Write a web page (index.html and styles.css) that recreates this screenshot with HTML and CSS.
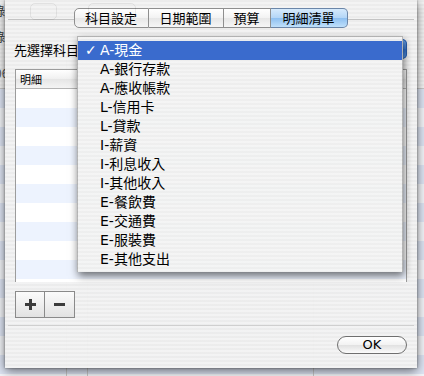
FILE: index.html
```html
<!DOCTYPE html>
<html lang="zh-Hant">
<head>
    <meta charset="UTF-8">
    <title>明細清單</title>
    <link rel="stylesheet" href="styles.css">
</head>
<body>
    <div class="desk">
        <div class="back">
            <div class="back-head">
                <span class="back-txt t1">錄</span>
                <span class="back-txt t2">錄</span>
                <span class="back-txt t3">06</span>
            </div>
            <div class="back-rows"></div>
            <div class="back-col c1"></div>
            <div class="back-col c2"></div>
            <div class="back-col c3"></div>
        </div>

        <div class="sheet">
            <div class="ghost g1"></div>
            <div class="ghost g2"></div>

            <div class="tabbox">
                <div class="tabs">
                    <span class="tab w75">科目設定</span>
                    <span class="tab w75">日期範圍</span>
                    <span class="tab w47">預算</span>
                    <span class="tab w77 on">明細清單</span>
                </div>

                <div class="pick-row">
                    <span class="pick-label">先選擇科目</span>
                    <div class="popup"></div>
                </div>

                <div class="grid">
                    <div class="grid-head">
                        <span class="grid-col">明細</span>
                        <span class="grid-corner"></span>
                    </div>
                    <div class="grid-body"></div>
                </div>

                <div class="pm">
                    <button class="pm-btn">
                        <svg width="11" height="11" viewBox="0 0 11 11"><rect x="4" y="0" width="3" height="11" fill="#3c3c3c"/><rect x="0" y="4" width="11" height="3" fill="#3c3c3c"/></svg>
                    </button>
                    <button class="pm-btn">
                        <svg width="11" height="11" viewBox="0 0 11 11"><rect x="0" y="4" width="11" height="3" fill="#3c3c3c"/></svg>
                    </button>
                </div>
            </div>

            <div class="foot">
                <button class="ok">OK</button>
            </div>
        </div>

        <ul class="menu">
            <li class="item sel"><span class="check">✓</span>A-現金</li>
            <li class="item">A-銀行存款</li>
            <li class="item">A-應收帳款</li>
            <li class="item">L-信用卡</li>
            <li class="item">L-貸款</li>
            <li class="item">I-薪資</li>
            <li class="item">I-利息收入</li>
            <li class="item">I-其他收入</li>
            <li class="item">E-餐飲費</li>
            <li class="item">E-交通費</li>
            <li class="item">E-服裝費</li>
            <li class="item">E-其他支出</li>
        </ul>
    </div>
</body>
</html>
```

FILE: styles.css
```css
body { margin: 0; font-family: "DejaVu Sans", "Noto Sans CJK TC", sans-serif; color: #000; }
.desk { position: relative; width: 424px; height: 376px; overflow: hidden; background: #f2f2f2; }

/* window behind the sheet */
.back { position: absolute; inset: 0; background: repeating-linear-gradient(#eeeeee 0 2px, #f5f5f5 2px 4px); }
.back-head { height: 88px; border-bottom: 1px solid #c9c9c9; position: relative; }
.back-txt { position: absolute; left: -7px; font-size: 12px; color: #333; font-family: "Noto Sans CJK TC", sans-serif; }
.t1 { top: 2px; }
.t2 { top: 28px; }
.t3 { top: 64px; left: -5px; color: #555; }
.back-rows { height: 288px; background: repeating-linear-gradient(#dfe6f5 0 19px, #f4f6fa 19px 38px); }
.back-col { position: absolute; top: 60px; bottom: 0; width: 1px; background: #c8c8c8; }
.c1 { left: 66px; }
.c2 { left: 87px; }
.c3 { left: 313px; }

/* the sheet */
.sheet {
    position: absolute; left: 5px; top: 0; width: 412px; height: 368px;
    background: repeating-linear-gradient(rgba(236,236,236,.97) 0 2px, rgba(243,243,243,.97) 2px 4px);
    box-shadow: 0 3px 10px rgba(0,0,0,.55), 0 0 2px rgba(0,0,0,.4);
}
.ghost { position: absolute; top: 3px; height: 15px; border: 1px solid rgba(0,0,0,.07); border-radius: 5px; }
.g1 { left: 25px; width: 25px; }
.g2 { left: 83px; width: 46px; }

.tabbox {
    margin: 19px 3px 0; height: 305px;
    border-top: 1px solid #c4c4c4; border-bottom: 1px solid #cfcfcf;
}

.tabs { display: flex; justify-content: center; margin-top: -12px; height: 20px; margin-left: -1px; }
.tab {
    box-sizing: border-box; height: 20px; line-height: 18px; text-align: center; font-size: 13px;
    border: 1px solid #8f8f8f; border-left: none;
    background: linear-gradient(#ffffff, #f3f3f3 48%, #e7e7e7 52%, #f6f6f6);
    font-family: "Noto Sans CJK TC", sans-serif;
}
.tab:first-child { border-left: 1px solid #8f8f8f; border-radius: 5px 0 0 5px; }
.tab:last-child { border-radius: 0 5px 5px 0; }
.w75 { width: 75px; }
.w47 { width: 47px; }
.w77 { width: 77px; }
.tab.on { background: linear-gradient(#d6eafc, #b4d6f7 48%, #8fc0f0 52%, #bfe0fb); border-color: #6b86a8; }

.pick-row { display: flex; align-items: center; margin-top: 11px; height: 20px; }
.pick-label {
    box-sizing: border-box; width: 70px; flex-shrink: 0; padding-left: 6px; white-space: nowrap;
    font-size: 13px; font-family: "Noto Sans CJK TC", sans-serif;
}
.popup {
    width: 329px; height: 20px; flex-shrink: 0; border-radius: 5px;
    background: linear-gradient(#6fa8ec, #3f80dc 50%, #3575d4 52%, #5a9ae6);
    box-shadow: inset 0 0 0 1px #2c5fae;
}

.grid { margin: 10px 0 0 7px; width: 392px; height: 213px; box-sizing: border-box; border: 1px solid #9c9c9c; background: #fff; }
.grid-head { display: flex; height: 18px; border-bottom: 1px solid #b4b4b4; background: linear-gradient(#ffffff, #f0f0f0 50%, #e6e6e6 52%, #f4f4f4); }
.grid-col { flex: 1; font-size: 11px; line-height: 18px; padding-left: 4px; font-family: "Noto Sans CJK TC", sans-serif; }
.grid-corner { width: 4px; border-left: 1px solid #a9a9a9; }
.grid-body { height: 193px; background: repeating-linear-gradient(#ffffff 0 19px, #edf3fe 19px 38px); }

.pm { display: flex; margin: 9px 0 0 7px; }
.pm-btn {
    width: 30px; height: 27px; padding: 0; display: flex; align-items: center; justify-content: center;
    border: 1px solid #8a8a8a; background: linear-gradient(#fbfbfb, #efefef 50%, #e2e2e2);
}
.pm-btn + .pm-btn { border-left: none; }

.foot { display: flex; justify-content: flex-end; padding: 10px 10px 0 0; }
.ok {
    width: 70px; height: 18px; padding: 0; border: 1px solid #6f6f6f; border-radius: 9px;
    background: linear-gradient(#ffffff, #f2f2f2 50%, #e1e1e1 52%, #fbfbfb);
    font-family: "DejaVu Sans", sans-serif; font-size: 13px; line-height: 16px; color: #000;
}

/* pop-up menu, open over the sheet */
.menu {
    position: absolute; left: 77px; top: 36px; width: 324px; margin: 0; padding: 4px 0 3px; list-style: none;
    background: repeating-linear-gradient(rgba(244,244,244,.97) 0 2px, rgba(238,238,238,.97) 2px 4px);
    border: 1px solid rgba(0,0,0,.25); border-bottom: none;
    box-shadow: 1px 4px 8px rgba(0,0,0,.55);
}
.item { position: relative; height: 19px; line-height: 19px; padding-left: 22px; font-size: 14px; }
.item.sel { background: #3a6bcd; color: #fff; }
.check { position: absolute; left: 7px; top: 0; font-size: 14px; }
```
